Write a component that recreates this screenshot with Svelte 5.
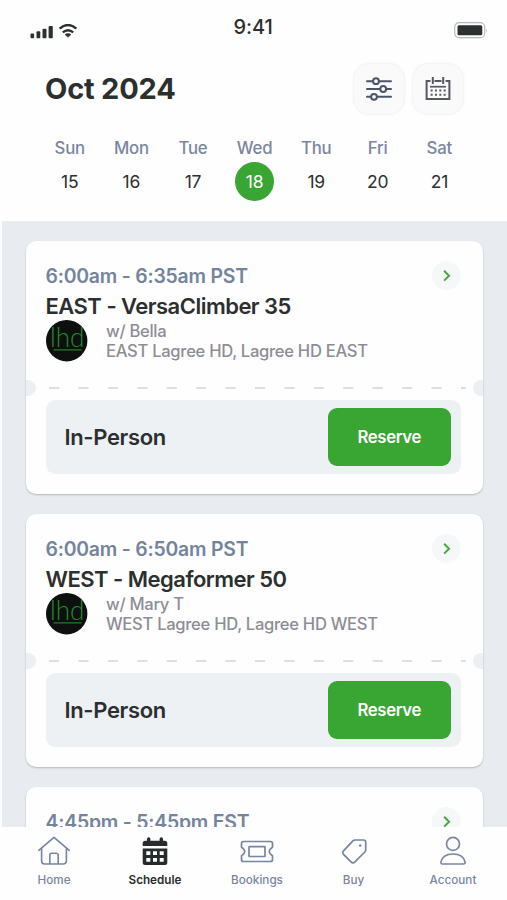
<script>
  const days = [
    ['Sun', 15], ['Mon', 16], ['Tue', 17], ['Wed', 18], ['Thu', 19], ['Fri', 20], ['Sat', 21]
  ];
  const classes = [
    { time: '6:00am - 6:35am PST', title: 'EAST - VersaClimber 35', coach: 'w/ Bella', place: 'EAST Lagree HD, Lagree HD EAST' },
    { time: '6:00am - 6:50am PST', title: 'WEST - Megaformer 50', coach: 'w/ Mary T', place: 'WEST Lagree HD, Lagree HD WEST' },
    { time: '4:45pm - 5:45pm EST' }
  ];
</script>

<div class="screen">
  <header>
    <div class="status">
      <svg class="signal" width="48" height="16" viewBox="0 0 48 16">
        <g fill="#2c3030">
          <rect x="0.5" y="9.5" width="3.6" height="4.7" rx="1" />
          <rect x="6.5" y="7.2" width="3.8" height="7" rx="1" />
          <rect x="12.5" y="4.8" width="4" height="9.4" rx="1" />
          <rect x="18.6" y="2" width="4.2" height="12.2" rx="1" />
          <path d="M38 9.6q2 0 3 1L38 13.2 35 10.6q1-1 3-1z" stroke="#2c3030" stroke-width=".5" stroke-linejoin="round" />
        </g>
        <path d="M29.6 4.6Q38 -2.6 46.4 4.6M32.8 8.4Q38 4 43.2 8.4" fill="none" stroke="#2c3030" stroke-width="2.3" />
      </svg>
      <span class="clock">9:41</span>
      <svg class="battery" width="34" height="17" viewBox="0 0 34 17">
        <rect x=".7" y=".7" width="30" height="15" rx="4.5" fill="#fff" stroke="#b7b9b9" stroke-width="1.2" />
        <rect x="3.5" y="3.3" width="24.8" height="10" rx="1.5" fill="#2c3030" />
        <path d="M32.2 6.5q1.4 2 0 4z" fill="#a9abab" />
      </svg>
    </div>
    <div class="heading">
      <h1>Oct 2024</h1>
      <div class="tools">
        <button aria-label="Filters">
          <svg width="26" height="26" viewBox="0 0 26 26" fill="none" stroke="#4b5468" stroke-width="2" stroke-linecap="round">
            <path d="M1 5.2h6M13.2 5.2H25M1 13h13M20.2 13H25M1 20.8h4M11.2 20.8H25" />
            <circle cx="10" cy="5.2" r="2.9" /><circle cx="17.2" cy="13" r="2.9" /><circle cx="8" cy="20.8" r="2.9" />
          </svg>
        </button>
        <button aria-label="Calendar">
          <svg width="26" height="26" viewBox="0 0 26 26" fill="none" stroke="#55595f" stroke-width="2">
            <path d="M5.5 5H1.6V23H24.4V5H20.5M9.5 5h7M7.8 1v7M18.2 1v7" />
            <path d="M5 10.7h16" stroke-width="1.7" />
            <path d="M5.6 14.5h16M5.6 18.7h16" stroke-dasharray="2 2.35" />
          </svg>
        </button>
      </div>
    </div>
    <div class="week">
      {#each days as [name, date]}
        <div class="day">
          <span class="name">{name}</span>
          <span class="date" class:active={date === 18}>{date}</span>
        </div>
      {/each}
    </div>
  </header>

  <main>
    {#each classes as c}
      <article>
        <div class="timerow">
          <span class="time">{c.time}</span>
          <span class="go">
            <svg width="9" height="12" viewBox="0 0 9 12" fill="none" stroke="#43a83a" stroke-width="1.9"><path d="M2.1 .8l5 4.9-5 4.9" /></svg>
          </span>
        </div>
        {#if c.title}
          <h2>{c.title}</h2>
          <div class="info">
            <svg class="logo" width="42" height="42" viewBox="0 0 42 42">
              <circle cx="20.7" cy="20.7" r="20.7" fill="#0d100e" />
              <text x="4" y="27.3" textLength="34.5" lengthAdjust="spacingAndGlyphs">lhd</text>
              <path d="M7.5 29.9h28" stroke="#257d2b" stroke-width="1.3" />
            </svg>
            <p><span class="coach">{c.coach}</span><span class="place">{c.place}</span></p>
          </div>
          <div class="tear">
            <i></i>
            <svg width="417" height="2" viewBox="0 0 417 2"><path d="M0 1h417" stroke="#dcdfe0" stroke-width="2" stroke-dasharray="10.2 19.22" /></svg>
            <i class="right"></i>
          </div>
          <div class="panel">
            <span>In-Person</span>
            <button>Reserve</button>
          </div>
        {/if}
      </article>
    {/each}
  </main>

  <nav>
    <div class="tab home">
      <svg width="34" height="32" viewBox="0 0 34 32" fill="none" stroke="#7785a0" stroke-width="1.6" stroke-linecap="round" stroke-linejoin="round">
        <path d="M1.8 15.3L17 2.3l15.2 13M4.6 13.2V26a3 3 0 0 0 3 3H26.4a3 3 0 0 0 3-3V13.2M12.8 29V20.3a2 2 0 0 1 2-2h4.4a2 2 0 0 1 2 2V29" />
      </svg>
      <span>Home</span>
    </div>
    <div class="tab schedule">
      <svg width="34" height="32" viewBox="0 0 34 32" fill="#272b2b">
        <path d="M4.7 11V8.2a2.5 2.5 0 0 1 2.5-2.5H9V4a1.6 1.6 0 0 1 3.4 0v1.7h9.2V4A1.6 1.6 0 0 1 25 4v1.7h1.8a2.5 2.5 0 0 1 2.5 2.5V11z" />
        <path fill-rule="evenodd" d="M4.7 13.5h24.6v14a2.5 2.5 0 0 1-2.5 2.5H7.2a2.5 2.5 0 0 1-2.5-2.5zM8.3 16.3v3.7h4v-3.7zM15 16.3v3.7h4v-3.7zM21.7 16.3v3.7h4v-3.7zM8.3 23v3.7h4V23zM15 23v3.7h4V23zM21.7 23v3.7h4V23z" />
      </svg>
      <span>Schedule</span>
    </div>
    <div class="tab bookings">
      <svg width="34" height="32" viewBox="0 0 34 32" fill="none" stroke="#7785a0" stroke-width="1.7" stroke-linejoin="round">
        <path d="M3.5 6.5H30.5a2 2 0 0 1 2 2v3.7l-2.2 2a3.2 3.2 0 0 0 0 4.6l2.2 2V24.5a2 2 0 0 1-2 2H3.5a2 2 0 0 1-2-2V20.8l2.2-2a3.2 3.2 0 0 0 0-4.6l-2.2-2V8.5a2 2 0 0 1 2-2z" />
        <rect x="9" y="11.7" width="16" height="9.8" rx=".5" />
      </svg>
      <span>Bookings</span>
    </div>
    <div class="tab buy">
      <svg width="34" height="32" viewBox="0 0 34 32" fill="none" stroke="#7785a0" stroke-width="1.7" stroke-linejoin="round">
        <path d="M18 5H26.5a2.2 2.2 0 0 1 2.2 2.2V14.8a3 3 0 0 1-.9 2.2L17.7 27.2a2.4 2.4 0 0 1-3.4 0L6.5 19.3a2.4 2.4 0 0 1 0-3.4L15.9 5.9a3 3 0 0 1 2.1-.9z" />
        <circle cx="23.2" cy="10.5" r="1.3" fill="#7785a0" stroke="none" />
      </svg>
      <span>Buy</span>
    </div>
    <div class="tab account">
      <svg width="34" height="32" viewBox="0 0 34 32" fill="none" stroke="#7785a0" stroke-width="1.7" stroke-linejoin="round">
        <circle cx="17" cy="8.9" r="6.5" />
        <path d="M6.5 29a1.6 1.6 0 0 1-1.6-1.8C5.8 22.5 10 19 17 19S28.2 22.5 29.1 27.2a1.6 1.6 0 0 1-1.6 1.8z" />
      </svg>
      <span>Account</span>
    </div>
  </nav>
</div>

<style>
  .screen {
    width: 507px; height: 900px; overflow: hidden; background: #fefefe;
    display: flex; flex-direction: column;
    font-family: Inter, "Liberation Sans", sans-serif; color: #2c2f30;
  }
  h1, h2, p { margin: 0; }
  button { border: 0; padding: 0; font-family: inherit; }
  svg { display: block; }
  header { height: 221px; flex: none; }
  .status { display: flex; align-items: flex-start; height: 64px; padding: 0 19px 0 30px; box-sizing: border-box; }
  .signal { margin-top: 24px; }
  .clock { margin: 15px auto 0 155.5px; font-size: 20px; line-height: 24px; font-weight: 500; letter-spacing: -0.1px; }
  .battery { margin-top: 22px; }
  .heading { display: flex; justify-content: space-between; align-items: center; height: 50px; padding: 0 44px 0 45px; }
  h1 { font-size: 29px; line-height: 50px; font-weight: 650; letter-spacing: -0.2px; }
  .tools { display: flex; gap: 9px; }
  .tools button {
    width: 50px; height: 50px; border-radius: 15px; background: #fafafb;
    box-shadow: 0 0 3px #0000001c; display: grid; place-items: center;
  }
  .week { display: flex; padding: 23px 37px 0 39px; }
  .day { width: 61.6px; flex: none; display: flex; flex-direction: column; align-items: center; }
  .name { font-size: 16.8px; line-height: 23px; height: 22px; color: #7a86a0; font-weight: 450; letter-spacing: -0.2px; }
  .date { width: 39px; height: 39px; margin-top: 3px; border-radius: 50%; font-size: 17.5px; line-height: 40px; text-align: center; letter-spacing: -0.2px; }
  .active { background: #39a633; color: #fff; }
  main {
    flex: 1; min-height: 0; overflow: hidden; background: #e8ebef; margin-left: 2px;
    padding: 20px 24px 0; display: flex; flex-direction: column; gap: 20px;
  }
  article {
    height: 253px; flex: none; box-sizing: border-box; background: #fefefe; border-radius: 10px;
    padding: 20px 22px 0 19.5px; box-shadow: 0 1px 2px #00000038; overflow: hidden;
  }
  .timerow { display: flex; justify-content: space-between; height: 30px; line-height: 30px; }
  .time { font-size: 19.4px; font-weight: 620; color: #74849c; letter-spacing: -0.2px; }
  .go { width: 29px; height: 29px; border-radius: 50%; background: #f6f7f9; display: grid; place-items: center; }
  h2 { font-size: 22px; line-height: 31px; height: 28.5px; font-weight: 640; letter-spacing: -0.52px; }
  .info { display: flex; height: 42px; gap: 18.5px; }
  .logo text { font-family: Lato, sans-serif; font-weight: 300; font-size: 27px; fill: #278a2d; }
  .info p { display: flex; flex-direction: column; font-size: 16.6px; line-height: 20px; color: #8d8d96; padding-top: 1px; font-weight: 450; letter-spacing: -0.3px; }
  .tear { height: 16px; margin: 18.5px -22px 0 -19.5px; display: flex; align-items: center; }
  .tear svg { margin-left: 13px; flex: none; }
  i { width: 10px; height: 16px; background: #edf0f3; border-radius: 0 8px 8px 0; }
  i.right { border-radius: 8px 0 0 8px; margin-left: auto; }
  .panel {
    height: 74px; margin-top: 3.9px; box-sizing: border-box; padding: 0 10px 0 19px; border-radius: 9px;
    background: #edf1f4; display: flex; align-items: center; justify-content: space-between;
  }
  .panel span { font-size: 22px; font-weight: 600; letter-spacing: -0.35px; }
  .panel button { width: 123.5px; height: 58px; border-radius: 9px; background: #39a633; color: #fff; font-size: 16.7px; font-weight: 600; letter-spacing: -0.3px; }
  nav { height: 73px; flex: none; display: flex; background: #fefefe; }
  .tab { flex: none; display: flex; flex-direction: column; align-items: center; padding-top: 8px; color: #7785a0; }
  .tab span { font-size: 11.7px; line-height: 16px; margin-top: 5px; font-weight: 500; }
  .home { width: 108px; }
  .schedule { width: 94px; }
  .bookings { width: 110px; }
  .buy { width: 83px; }
  .account { width: 116px; }
  .schedule span { color: #272b2b; font-weight: 600; }
</style>
